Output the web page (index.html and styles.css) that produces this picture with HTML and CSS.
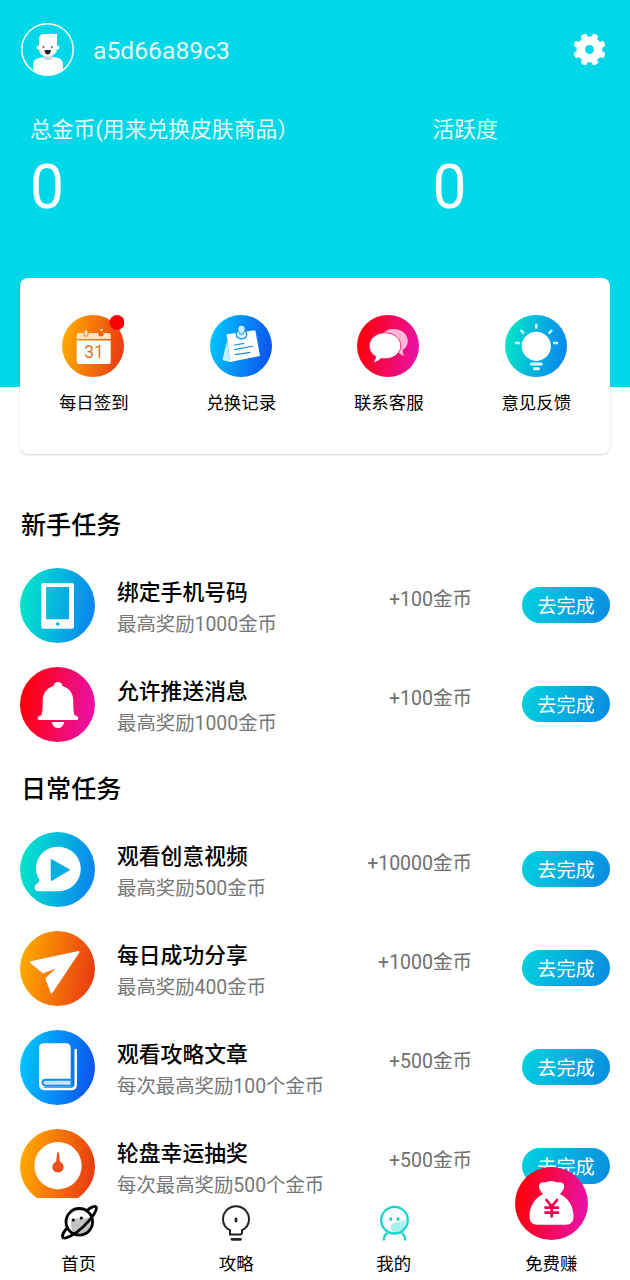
FILE: index.html
```html
<!DOCTYPE html>
<html lang="zh-CN">
<head>
<meta charset="utf-8">
<title>我的</title>
<link rel="stylesheet" href="styles.css">
</head>
<body>
<svg class="defs" width="0" height="0" aria-hidden="true">
  <defs>
    <linearGradient id="orange" x1="0" y1=".42" x2="1" y2=".58"><stop offset="0" stop-color="#ffab00"/><stop offset="1" stop-color="#e93a12"/></linearGradient>
    <linearGradient id="blue" x1="0" y1=".42" x2="1" y2=".58"><stop offset="0" stop-color="#00c6ff"/><stop offset="1" stop-color="#0d52ee"/></linearGradient>
    <linearGradient id="red" x1="0" y1=".42" x2="1" y2=".58"><stop offset="0.08" stop-color="#ff0010"/><stop offset="1" stop-color="#e812aa"/></linearGradient>
    <linearGradient id="teal" x1="0" y1=".42" x2="1" y2=".58"><stop offset="0" stop-color="#02e6cb"/><stop offset="1" stop-color="#0a84f0"/></linearGradient>
    <clipPath id="avatar-clip"><circle cx="26.5" cy="26.5" r="26"/></clipPath>
  </defs>
</svg>

<main class="page">
  <header class="hero">
    <div class="profile">
      <svg class="avatar" viewBox="0 0 53 53">
        <g clip-path="url(#avatar-clip)" fill="#fff">
          <path d="M12 53V42Q12 36 18 35L23 34h9l5 1q5 1 5 7v11z"/>
          <path d="M22.500 31h9v4.500q-4.500 4-9 0z" fill="#cfd6da"/>
          <path d="M18 16q0-5 5-5h13v14q0 8-9 8.500T18 25z"/>
          <circle cx="17.500" cy="24.500" r="2"/><circle cx="36.500" cy="24.500" r="2"/>
          <path d="M23.500 27h6.500q-.5 4.500-3.300 4.500T23.500 27z" fill="#222"/>
          <circle cx="22.500" cy="24" r="1" fill="#555"/><circle cx="30.800" cy="24" r="1" fill="#555"/>
        </g>
        <circle cx="26.500" cy="26.500" r="25.700" fill="none" stroke="#fff" stroke-width="1.500"/>
      </svg>
      <span class="name">a5d66a89c3</span>
      <svg class="gear" viewBox="-16 -16 32 32">
        <g fill="#fff">
          <circle r="12.500"/>
          <rect x="-3" y="-15.800" width="6" height="31.600" rx="2" transform="rotate(22.500)"/>
          <rect x="-3" y="-15.800" width="6" height="31.600" rx="2" transform="rotate(67.500)"/>
          <rect x="-3" y="-15.800" width="6" height="31.600" rx="2" transform="rotate(112.500)"/>
          <rect x="-3" y="-15.800" width="6" height="31.600" rx="2" transform="rotate(157.500)"/>
        </g>
        <circle r="4.300" fill="#00d8e8"/>
      </svg>
    </div>
    <div class="stats">
      <div class="stat"><span class="stat-label">总金币(用来兑换皮肤商品）</span><span class="stat-value">0</span></div>
      <div class="stat"><span class="stat-label">活跃度</span><span class="stat-value">0</span></div>
    </div>
  </header>

  <section class="shortcuts">
    <a class="shortcut">
      <svg class="shortcut-icon" viewBox="0 0 62 62">
        <circle cx="31" cy="31" r="31" fill="url(#orange)"/>
        <path d="M14.700 24V20q0-2 2-2h30q2 0 2 2v4z" fill="#ffe3c8"/>
        <path d="M14.700 25.500h34V47q0 2-2 2h-30q-2 0-2-2z" fill="#fff"/>
        <rect x="22" y="14.800" width="4" height="6.500" rx="2" fill="#ffe3c8" stroke="#ed7d0c"/>
        <path d="M36.500 17.500v2a2.500 2 0 0 0 5 0v-2z" fill="#ea640e"/><path d="M38 15h3" stroke="#ffe3c8" stroke-width="1.500"/>
        <text x="32" y="43.300" text-anchor="middle" class="calendar-day">31</text>
        <circle cx="55" cy="7.500" r="7.500" fill="#f80008"/>
      </svg>
      <span>每日签到</span>
    </a>
    <a class="shortcut">
      <svg class="shortcut-icon" viewBox="0 0 62 62">
        <circle cx="31" cy="31" r="31" fill="url(#blue)"/>
        <path d="M17 26l-4.700 19 7.700 2z" fill="#c2eeff"/>
        <path d="M16.700 19.300L45.300 15.300 50 41 20 47z" fill="#fff"/>
        <ellipse cx="31.500" cy="19.500" rx="5.300" ry="4.500" fill="#d5f0ff" stroke="#169af0" stroke-width="1.300"/>
        <path d="M29.500 14h4v5q-2 1.500-4 0z" fill="#9edcff" stroke="#169af0" stroke-width=".7"/>
        <circle cx="31.500" cy="14" r="3.200" fill="#c9edff"/>
        <path d="M24.300 30l10-1.700M24.300 34.700l19-3.700M25 39.700l15.300-2.400" stroke="#168ee8" stroke-width="1.200"/>
      </svg>
      <span>兑换记录</span>
    </a>
    <a class="shortcut">
      <svg class="shortcut-icon" viewBox="0 0 62 62">
        <circle cx="31" cy="31" r="31" fill="url(#red)"/>
        <path d="M36 14c9 0 14.800 5 14.800 12 0 4-2 7-5 9 0 2.500.6 4 1.700 5.800-2.800-.5-5.200-1.800-6.500-3.800L26 19c1.500-3 5.500-5 10-5z" fill="#ffb7da"/>
        <path d="M28 17.800c9 0 15.800 5.700 15.800 13s-6.800 13-15.800 13c-1.500 0-2.700-.1-4-.4-1.800 2.200-4.400 3.800-8 4.200 1.600-1.800 2.400-3.800 2.500-6.200-4-2.400-6.300-6-6.300-10.600 0-7.300 6.800-13 15.800-13z" fill="#fff" stroke="#e80058" stroke-width=".8"/>
      </svg>
      <span>联系客服</span>
    </a>
    <a class="shortcut">
      <svg class="shortcut-icon" viewBox="0 0 62 62">
        <circle cx="31" cy="31" r="31" fill="url(#teal)"/>
        <circle cx="31.300" cy="31.300" r="14.600" fill="#fff"/>
        <path d="M31.300 8.700v5M15.700 15l3.200 3.500M47 15l-3.300 3.700M9.800 28h5M48 28h5" stroke="#c9fbff" stroke-width="2.500"/>
        <path d="M26.500 49h9.800M29.500 53.700h4" stroke="#d9fbff" stroke-width="3" stroke-linecap="round"/>
      </svg>
      <span>意见反馈</span>
    </a>
  </section>

  <section class="tasks">
    <h2>新手任务</h2>
    <article class="task">
      <svg class="task-icon" viewBox="0 0 75 75">
        <circle cx="37.500" cy="37.500" r="37.500" fill="url(#teal)"/>
        <path fill-rule="evenodd" d="M23.300 15H52q2 0 2 2v41.700q0 2-2 2H23.300q-2 0-2-2V17q0-2 2-2zM26 19v32.300h23V19z" fill="#fff"/>
        <circle cx="37.700" cy="56" r="1.800" fill="#07b7dc"/>
      </svg>
      <div class="task-text"><h3>绑定手机号码</h3><p>最高奖励1000金币</p></div>
      <span class="reward">+100金币</span><button class="go">去完成</button>
    </article>
    <article class="task">
      <svg class="task-icon" viewBox="0 0 75 75">
        <circle cx="37.500" cy="37.500" r="37.500" fill="url(#red)"/>
        <path d="M38 15c-2.600 0-4.300 1.700-4.500 4-7 2-10.800 7.500-10.800 15 0 7-.2 11-1.200 14-.8 1-3.800 1-3.800 3 0 1.300.6 2 1.800 2h37c1.200 0 1.800-.7 1.800-2 0-2-3-2-3.800-3-1-3-1.200-7-1.200-14 0-7.500-3.800-13-10.800-15-.2-2.300-1.900-4-4.500-4z" fill="#fff"/>
        <path d="M31.700 55h12.600q-1.500 6-6.300 6t-6.300-6z" fill="#fff"/>
      </svg>
      <div class="task-text"><h3>允许推送消息</h3><p>最高奖励1000金币</p></div>
      <span class="reward">+100金币</span><button class="go">去完成</button>
    </article>

    <h2>日常任务</h2>
    <article class="task">
      <svg class="task-icon" viewBox="0 0 75 75">
        <circle cx="37.500" cy="37.500" r="37.500" fill="url(#teal)"/>
        <path d="M38.500 14.700A22.200 22.200 0 0 1 38.500 59.200H18.500c-4 0-5-4-3-6.500 1.300-1.600 4-2.200 4-5-5-7-4.500-17 .5-24 4.500-6 11-9 18.500-9z" fill="#fff"/>
        <path d="M31.500 28l17.500 9.800-17.500 10.200z" fill="#07aee0" stroke="#07aee0" stroke-width="1.500" stroke-linejoin="round"/>
      </svg>
      <div class="task-text"><h3>观看创意视频</h3><p>最高奖励500金币</p></div>
      <span class="reward">+10000金币</span><button class="go">去完成</button>
    </article>
    <article class="task">
      <svg class="task-icon" viewBox="0 0 75 75">
        <circle cx="37.500" cy="37.500" r="37.500" fill="url(#orange)"/>
        <path d="M58.500 21L11 31.200l12 10 17-6.500-13.500 13 5 13.800z" fill="#fff" stroke="#fff" stroke-width="2" stroke-linejoin="round"/>
      </svg>
      <div class="task-text"><h3>每日成功分享</h3><p>最高奖励400金币</p></div>
      <span class="reward">+1000金币</span><button class="go">去完成</button>
    </article>
    <article class="task">
      <svg class="task-icon" viewBox="0 0 75 75">
        <circle cx="37.500" cy="37.500" r="37.500" fill="url(#blue)"/>
        <path d="M24 13.300h22q4.700 0 4.700 4.700v39H22q-3-2-3-5V18.300q0-5 5-5z" fill="#fff"/>
        <path d="M20.300 50v4q0 5 5 5H51q4.700 0 4.700-4.700V20" fill="none" stroke="#fff" stroke-width="2.600" stroke-linecap="round"/>
        <path d="M51.500 49.700H25.500a3 3 0 0 0 0 6H51.500z" fill="#c9e2ff" stroke="#0b8df8" stroke-width="1.900"/>
      </svg>
      <div class="task-text"><h3>观看攻略文章</h3><p>每次最高奖励100个金币</p></div>
      <span class="reward">+500金币</span><button class="go">去完成</button>
    </article>
    <article class="task">
      <svg class="task-icon" viewBox="0 0 75 75">
        <circle cx="37.500" cy="37.500" r="37.500" fill="url(#orange)"/>
        <circle cx="38" cy="36.700" r="23.700" fill="#fff"/>
        <path d="M38 23q.8 0 1 1.500l.8 8a5.700 5.700 0 1 1-3.600 0l.8-8q.2-1.500 1-1.500z" fill="#e9501c"/>
      </svg>
      <div class="task-text"><h3>轮盘幸运抽奖</h3><p>每次最高奖励500个金币</p></div>
      <span class="reward">+500金币</span><button class="go">去完成</button>
    </article>
  </section>
</main>

<nav class="tabs">
  <a class="tab">
    <svg class="tab-icon" viewBox="0 0 40 40">
      <path d="M12 18.500q5-3 9-2t9-1.500q4 8-1 13.500T17 33.500Q11 30 12 18.500z" fill="#c4c4c4"/>
      <circle cx="20.300" cy="19.800" r="13.300" fill="none" stroke="#000" stroke-width="2.800"/>
      <path d="M28.500 8C32 5 36 3.500 37.200 5 38.500 8.500 32 17.500 24 25S7 37.300 4.200 35.700C2.700 34 4.500 30 7.700 26.500" fill="none" stroke="#000" stroke-width="2.800" stroke-linecap="round"/>
      <circle cx="14.300" cy="18" r="1.600"/><circle cx="22.300" cy="16" r="1.600"/>
    </svg>
    <span>首页</span>
  </a>
  <a class="tab">
    <svg class="tab-icon" viewBox="0 0 40 40">
      <path d="M14 32.500v-4.300C9.500 26 7 22 7 17.200a13 13 0 0 1 26 0c0 4.800-2.500 8.800-7 11v2.300q0 2-2 2z" fill="none" stroke="#222" stroke-width="2"/>
      <path d="M20 17v2" stroke="#222" stroke-width="2.800" stroke-linecap="round"/>
      <path d="M16 37.300h8.500" stroke="#222" stroke-width="2.800" stroke-linecap="round"/>
    </svg>
    <span>攻略</span>
  </a>
  <a class="tab">
    <svg class="tab-icon" viewBox="0 0 40 40">
      <path d="M17 24q1-4 8-4l7-2q0 8-6 11t-9-1z" fill="#a9f1ed"/>
      <circle cx="20.500" cy="18.200" r="13.300" fill="none" stroke="#18d4cf" stroke-width="2.300"/>
      <path d="M16.800 15.500v3.300M24 15.500v3.300" stroke="#16cbc6" stroke-width="2.600"/>
      <path d="M13.500 31q-3.700 2-3.700 7.500M27.500 31q3.700 2 3.700 7.500" fill="none" stroke="#18d4cf" stroke-width="2.300"/>
    </svg>
    <span>我的</span>
  </a>
  <a class="tab">
    <svg class="earn" viewBox="0 0 73 73">
      <circle cx="36.500" cy="36.500" r="36.500" fill="url(#red)"/>
      <path d="M28 27q-5-5-4-9 1.500-3.500 6-2.500 6-3 12.500 0 5-1 6.500 2.500 1 4-4 9c8 4 13.500 12 13.500 22 0 6-2.500 8.700-8 8.700h-28c-5.500 0-8-2.700-8-8.700 0-10 5.500-18 13.500-22z" fill="#fff"/>
      <path d="M31.500 33l5.200 6.500L42 33M36.700 39.500v10M30.500 40.700H43M30.500 45.700H43" fill="none" stroke="#e8004c" stroke-width="2.700" stroke-linecap="round"/>
    </svg>
    <span>免费赚</span>
  </a>
</nav>
</body>
</html>
```
FILE: styles.css
```css
* { box-sizing: border-box; }

body {
  margin: 0;
  height: 1280px;
  display: flex;
  flex-direction: column;
  background: #fff;
  color: #000;
  font-family: Roboto, "Noto Sans CJK SC", sans-serif;
  overflow: hidden;
}

svg { display: block; flex: none; }
.defs { position: absolute; }
h2, h3, p { margin: 0; }

.page { height: 1198px; overflow: hidden; }

.hero {
  height: 387px;
  padding: 23px 20px 0;
  background: #00d8e8;
  color: #fff;
}
.profile { display: flex; align-items: center; height: 53px; padding: 0 4px 0 1px; }
.avatar { width: 53px; height: 53px; }
.name { flex: 1; padding: 2px 0 0 19px; font-size: 24.7px; opacity: .92; }
.gear { width: 33px; height: 33px; }

.stats { display: flex; padding: 38px 0 0 10px; }
.stat { display: flex; flex-direction: column; flex: none; width: 402.5px; }
.stat-label { font-size: 21.8px; line-height: 32px; opacity: .9; white-space: nowrap; }
.stat-value { font-size: 60.5px; line-height: 70px; margin-top: 7px; }

.shortcuts {
  position: relative;
  display: flex;
  height: 176px;
  margin: -109px 20px 0;
  padding: 37px 0 0;
  border-radius: 8px;
  background: #fff;
  box-shadow: 0 1px 2px rgba(0, 0, 0, .18);
}
.shortcut {
  flex: 1;
  display: flex;
  flex-direction: column;
  align-items: center;
  gap: 13px;
  font-size: 17.4px;
  line-height: 26px;
}
.shortcut-icon { width: 62px; height: 62px; margin-right: 1px; }
.calendar-day { font-family: Roboto, sans-serif; font-size: 17.5px; fill: #d9781f; }

.tasks { padding: 36px 20px 0; }
.tasks h2 {
  padding: 16px 0 10px 1px;
  font-size: 25.1px;
  font-weight: 500;
  line-height: 40px;
}
.task { display: flex; align-items: center; height: 99px; }
.task-icon { width: 75px; height: 75px; }
.task-text { flex: 1; padding: 7px 0 0 22px; line-height: 32px; }
.task h3 { font-size: 21.8px; font-weight: 500; line-height: 32px; }
.task p { font-size: 19.4px; color: #777; }
.reward { margin: 0 50px 12px 0; font-size: 19.5px; line-height: 28px; color: #707070; }
.go {
  width: 88px;
  height: 36px;
  margin-bottom: 1px;
  padding: 4px 0 0;
  border: 0;
  border-radius: 18px;
  background: linear-gradient(110deg, #00d3df, #0b8ae0);
  color: #fff;
  font: 19.2px/32px Roboto, "Noto Sans CJK SC", sans-serif;
}

.tabs { display: flex; height: 82px; background: #fff; }
.tab {
  position: relative;
  flex: 1;
  display: flex;
  flex-direction: column;
  align-items: center;
  justify-content: flex-end;
  padding-bottom: 3px;
  gap: 9px;
  font-size: 17.4px;
  line-height: 26px;
}
.tab-icon { width: 40px; height: 40px; }
.earn { position: absolute; top: -31px; left: 42px; width: 73px; height: 73px; }
```
